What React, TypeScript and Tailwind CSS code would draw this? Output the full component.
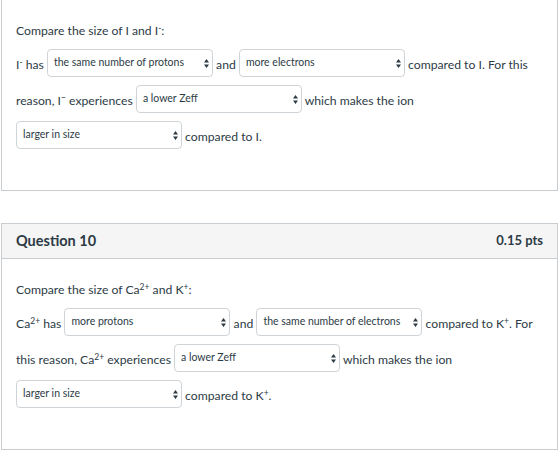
import React from "react";

const font = { fontFamily: "Lato, 'Noto Sans', sans-serif" };

function Arrows() {
  return (
    <svg width="5" height="9" viewBox="0 0 5 9" className="shrink-0">
      <path d="M2.5 0 L5 3.4 H0 Z M2.5 9 L5 5.6 H0 Z" fill="#2d3b45" />
    </svg>
  );
}

function Choice({ label }: { label: string }) {
  return (
    <span className="my-1 inline-flex h-[28px] w-[166px] items-center justify-between rounded-[4px] border border-[#cfd4d8] bg-white pl-[6px] pr-[3px] align-[3px] text-[10.5px] text-[#2d3b45]">
      <span className="leading-normal">{label}</span>
      <Arrows />
    </span>
  );
}

function Sup({ children }: { children: React.ReactNode }) {
  return <sup className="text-[8.5px]">{children}</sup>;
}

function Body({ children }: { children: React.ReactNode }) {
  return (
    <div className="px-[14px] pb-[37px] pt-[21px] text-[12.2px] text-[#2d3b45]">{children}</div>
  );
}

export default function App() {
  return (
    <div className="min-h-[453px] w-[560px] bg-white pl-[1px]" style={font}>
      {/* previous question, scrolled so only its body shows */}
      <div className="w-[557px] border-x border-b border-[#c7cdd1]">
        <Body>
          <p className="leading-[20px]">
            Compare the size of I and I<Sup>-</Sup>:
          </p>
          <p className="mt-[4px] leading-[20px]">
            I<Sup>-</Sup> has <Choice label="the same number of protons" /> and{" "}
            <Choice label="more electrons" /> compared to I. For this reason, I<Sup>−</Sup>{" "}
            experiences <Choice label="a lower Zeff" /> which makes the ion{" "}
            <Choice label="larger in size" /> compared to I.
          </p>
        </Body>
      </div>

      <div className="mt-[32px] w-[557px] border border-[#c7cdd1]">
        <div className="flex h-[35px] items-center justify-between border-b border-[#c7cdd1] bg-[#f5f5f5] px-[14px] text-[#2d3b45]">
          <span className="text-[14.5px] font-bold">Question 10</span>
          <span className="text-[13px] font-bold">0.15 pts</span>
        </div>
        <Body>
          <p className="leading-[20px]">
            Compare the size of Ca<Sup>2+</Sup> and K<Sup>+</Sup>:
          </p>
          <p className="mt-[4px] leading-[20px]">
            Ca<Sup>2+</Sup> has <Choice label="more protons" /> and{" "}
            <Choice label="the same number of electrons" /> compared to K<Sup>+</Sup>. For this
            reason, Ca<Sup>2+</Sup> experiences <Choice label="a lower Zeff" /> which makes the ion{" "}
            <Choice label="larger in size" /> compared to K<Sup>+</Sup>.
          </p>
        </Body>
      </div>
    </div>
  );
}
